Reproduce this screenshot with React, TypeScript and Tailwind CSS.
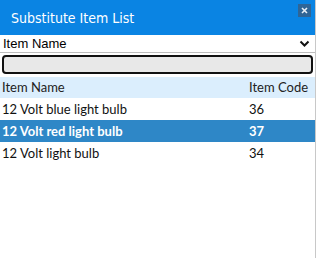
import React from "react";

const rows = [
  { name: "12 Volt blue light bulb", code: "36", selected: false },
  { name: "12 Volt red light bulb", code: "37", selected: true },
  { name: "12 Volt light bulb", code: "34", selected: false },
];

export default function App() {
  return (
    <div className="w-[316px] h-[258px] bg-white border-r border-[#c8c8c8] flex flex-col overflow-hidden">
      <div className="h-[35px] bg-[#0a84e3] flex items-start justify-between pl-[11px] pr-[4px]">
        <span
          className="text-white text-[14px] leading-[37px]"
          style={{ fontFamily: '"DejaVu Sans Condensed", "DejaVu Sans", sans-serif' }}
        >
          Substitute Item List
        </span>
        <div className="mt-[4px] w-[13px] h-[13px] bg-[#2f6596] flex items-center justify-center">
          <svg width="7" height="7" viewBox="0 0 7 7">
            <path d="M1 1L6 6M6 1L1 6" stroke="#e8f0f8" strokeWidth="1.6" />
          </svg>
        </div>
      </div>
      <div
        className="h-[18px] border-b border-[#bdbdbd] flex items-center justify-between pl-[3px] pr-[5px] text-[13px] text-black"
        style={{ fontFamily: '"Liberation Sans", Arial, sans-serif' }}
      >
        <span>Item Name</span>
        <svg width="11" height="8" viewBox="0 0 11 8">
          <path d="M1.5 1.5L5.5 5.5L9.5 1.5" stroke="#111" strokeWidth="2" fill="none" />
        </svg>
      </div>
      <div className="px-[2px] pt-[2px] pb-[3px]">
        <div className="h-[19px] rounded-[4px] border-2 border-[#111] bg-[#e8e8e8]" />
      </div>
      <div
        className="flex flex-col text-[13px]"
        style={{ fontFamily: 'Lato, "Open Sans", sans-serif' }}
      >
        <div className="h-[21px] bg-[#dbeefd] flex items-end pb-[1px] text-[#222]">
          <span className="pl-[2px] w-[249px]">Item Name</span>
          <span>Item Code</span>
        </div>
        {rows.map((r) => (
          <div
            key={r.code}
            className={
              r.selected
                ? "h-[22px] bg-[#2e87c7] text-white font-bold flex items-center pt-[1px]"
                : "h-[22px] bg-white text-[#111] flex items-center pt-[1px]"
            }
          >
            <span className="pl-[2px] w-[249px]">{r.name}</span>
            <span>{r.code}</span>
          </div>
        ))}
      </div>
    </div>
  );
}
